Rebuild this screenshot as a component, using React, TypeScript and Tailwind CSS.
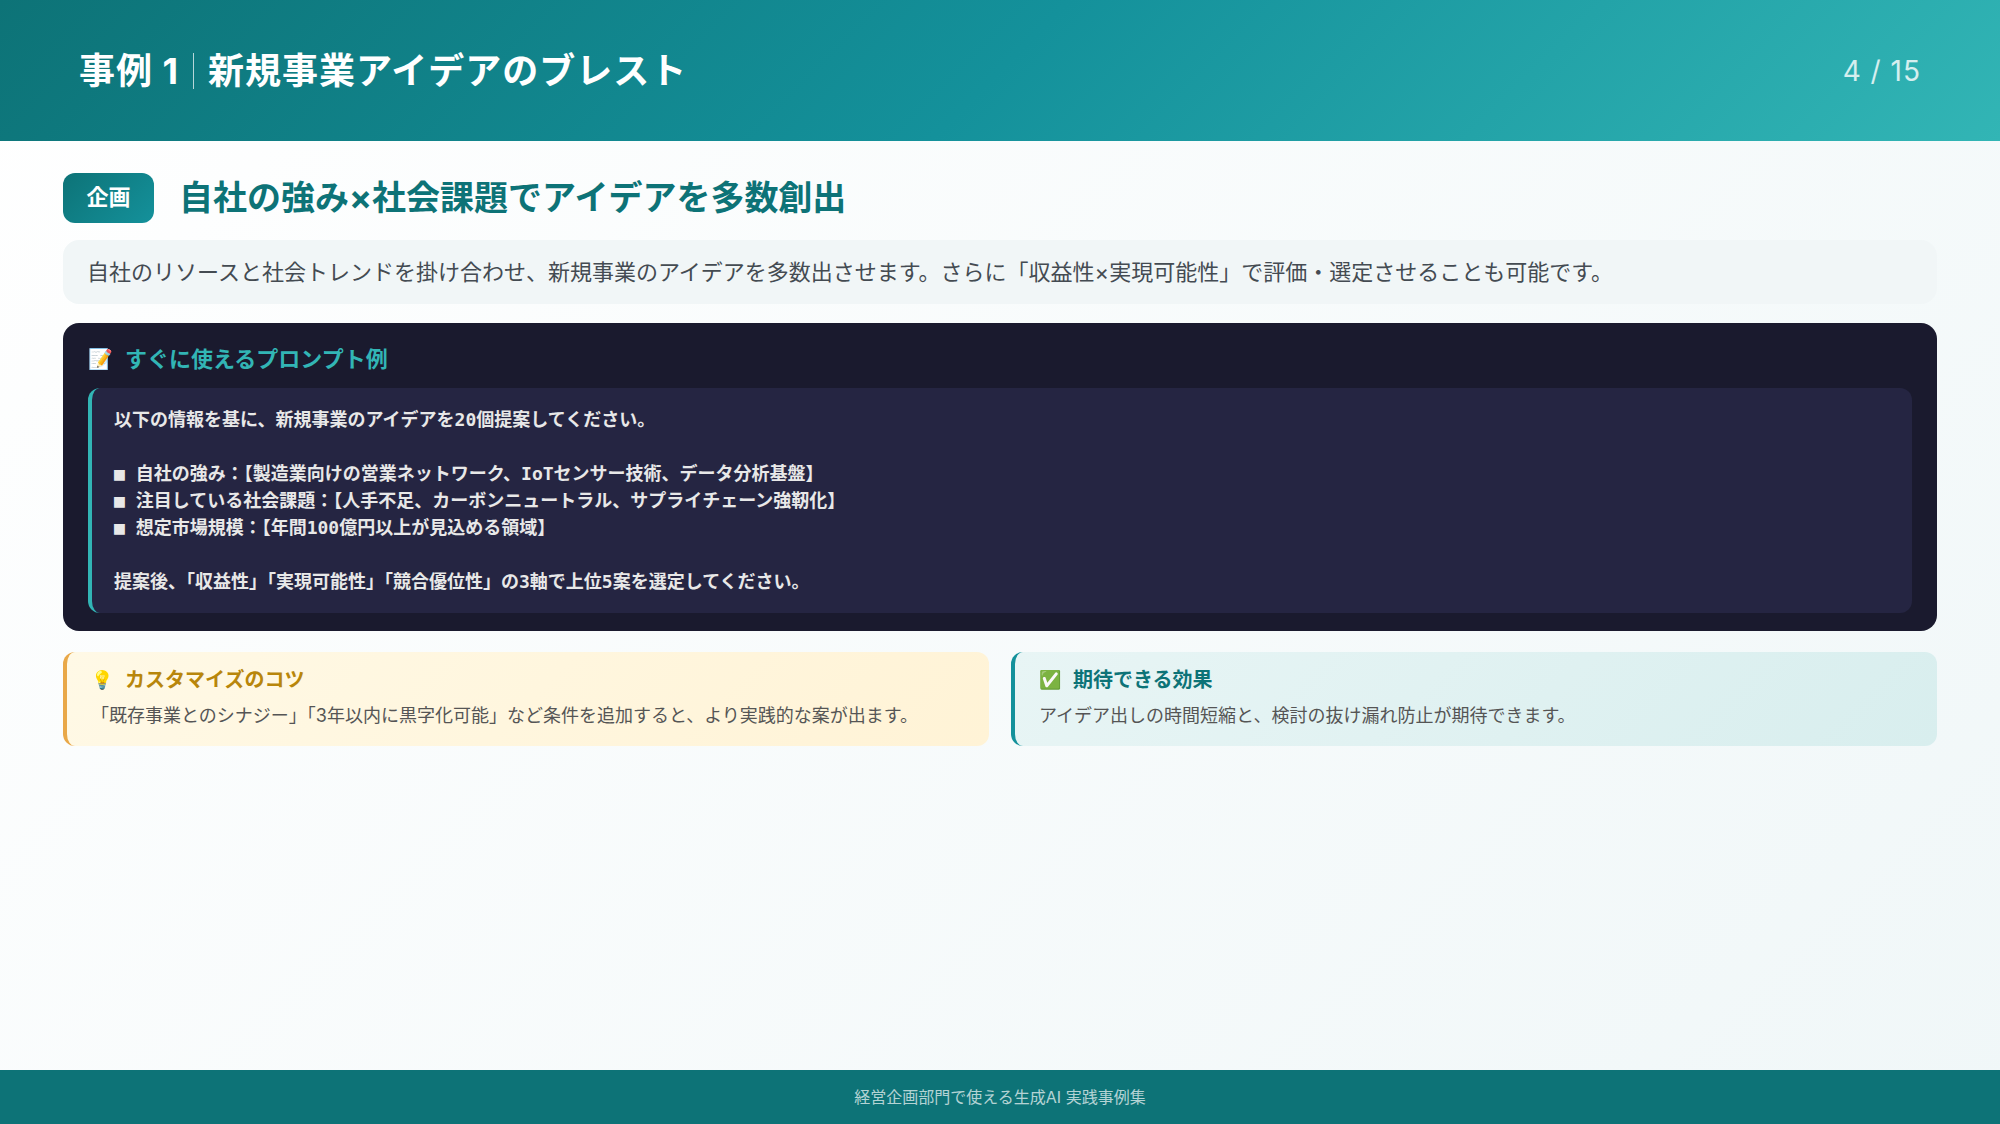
export default function App() {
  const jp = "font-['Inter','Noto_Sans_CJK_JP',sans-serif]";
  return (
    <div className={`flex h-[1124px] w-[2000px] flex-col overflow-hidden bg-[linear-gradient(135deg,#ffffff_0%,#f0f7f8_100%)] ${jp}`}>
      <header className="flex h-[141px] items-center justify-between bg-[linear-gradient(135deg,#0d7377_0%,#14919b_50%,#32b5b5_100%)] pl-[79px] pr-[79px] text-white">
        <h1 className="text-[36px] font-bold tracking-[1px]">
          事例 1<span className="mx-[14px] inline-block h-[36px] w-px bg-white/70 align-[-5px]"></span>新規事業アイデアのブレスト
        </h1>
        <div className="text-[28px] tracking-[1px] text-white/80">4 / 15</div>
      </header>
      <main className="flex-1 px-[63px] pt-[31px]">
        <div className="flex items-center gap-[25px]">
          <span className="flex h-[50px] w-[91px] items-center justify-center rounded-[12px] bg-[linear-gradient(135deg,#0d7377,#14919b)] text-[22px] font-bold text-white">企画</span>
          <h2 className="text-[34px] font-bold text-[#0d7377]">自社の強み×社会課題でアイデアを多数創出</h2>
        </div>
        <p className="mt-[17px] rounded-[16px] bg-[#f1f6f7] px-[24px] py-[15px] text-[22px] leading-[34px] text-[#444b52]">
          自社のリソースと社会トレンドを掛け合わせ、新規事業のアイデアを多数出させます。さらに「収益性×実現可能性」で評価・選定させることも可能です。
        </p>
        <section className="mt-[19px] rounded-[16px] bg-[#1a1a2e] px-[25px] pb-[18px] pt-[20px]">
          <div className="flex h-[45px] items-start gap-[12px] text-[22px] font-bold leading-[33px] text-[#32b5b5]">
            <span className="text-[20px] font-normal">📝</span>すぐに使えるプロンプト例
          </div>
          <pre className="rounded-[12px] border-l-[4px] border-[#32b5b5] bg-[#252542] px-[22px] py-[18px] font-['DejaVu_Sans_Mono','Noto_Sans_CJK_JP',monospace] text-[18px] font-bold leading-[27px] text-[#e8e8e8]">
{`以下の情報を基に、新規事業のアイデアを20個提案してください。

■ 自社の強み：【製造業向けの営業ネットワーク、IoTセンサー技術、データ分析基盤】
■ 注目している社会課題：【人手不足、カーボンニュートラル、サプライチェーン強靭化】
■ 想定市場規模：【年間100億円以上が見込める領域】

提案後、「収益性」「実現可能性」「競合優位性」の3軸で上位5案を選定してください。`}
          </pre>
        </section>
        <div className="mt-[21px] grid grid-cols-2 gap-[22px]">
          <div className="h-[94px] rounded-[12px] border-l-[4px] border-[#e9a848] bg-[linear-gradient(135deg,#fff9e6,#fff3d6)] px-[24px] pt-[13px]">
            <div className="flex items-center gap-[12px] text-[20px] font-bold leading-[30px] text-[#b8860b]"><span className="text-[18px] font-normal">💡</span>カスタマイズのコツ</div>
            <p className="mt-[7px] text-[18px] leading-[27px] text-[#555]">「既存事業とのシナジー」「3年以内に黒字化可能」など条件を追加すると、より実践的な案が出ます。</p>
          </div>
          <div className="h-[94px] rounded-[12px] border-l-[4px] border-[#14919b] bg-[linear-gradient(135deg,#e8f5f5,#d8eeee)] px-[24px] pt-[13px]">
            <div className="flex items-center gap-[12px] text-[20px] font-bold leading-[30px] text-[#0d7377]"><span className="text-[18px] font-normal">✅</span>期待できる効果</div>
            <p className="mt-[7px] text-[18px] leading-[27px] text-[#555]">アイデア出しの時間短縮と、検討の抜け漏れ防止が期待できます。</p>
          </div>
        </div>
      </main>
      <footer className="flex h-[54px] items-center justify-center bg-[#0d7377] text-[16px] text-white/70">経営企画部門で使える生成AI 実践事例集</footer>
    </div>
  );
}
